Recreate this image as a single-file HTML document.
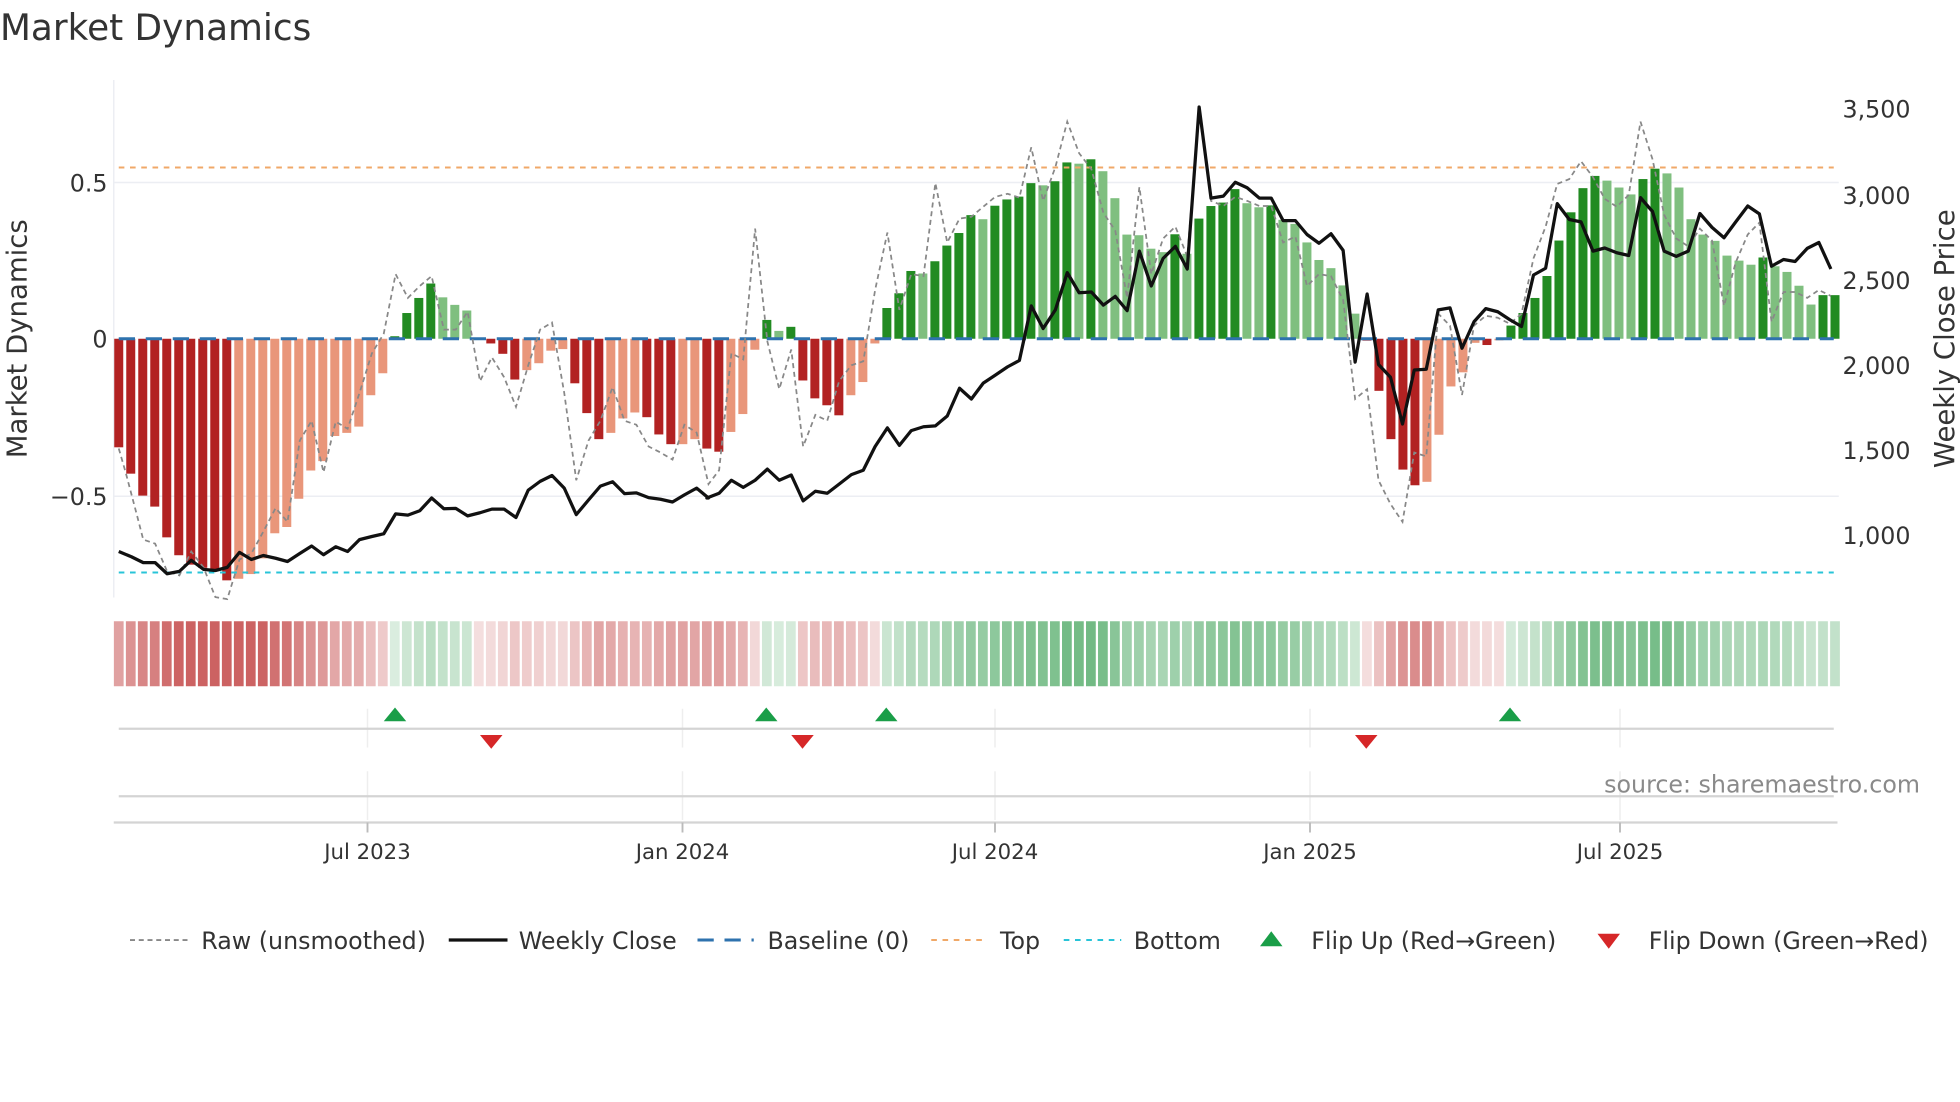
<!DOCTYPE html>
<html><head><meta charset="utf-8">
<style>
html,body{margin:0;padding:0;background:#fff;}
svg{display:block;font-family:"DejaVu Sans","Liberation Sans",sans-serif;}
</style></head>
<body>
<svg id="c" width="1960" height="1102" viewBox="0 0 1568 881.6" xmlns="http://www.w3.org/2000/svg">
<rect width="1568" height="882" fill="#fff"/>
<text x="0" y="32" font-size="29" fill="#333" textLength="249" lengthAdjust="spacingAndGlyphs">Market Dynamics</text>
<line x1="91" y1="146" x2="1471" y2="146" stroke="#eceef3" stroke-width="1.2"/>
<line x1="91" y1="397" x2="1471" y2="397" stroke="#eceef3" stroke-width="1.2"/>
<line x1="91" y1="64" x2="91" y2="478" stroke="#eceef3" stroke-width="1.2"/>
<g id="bars"></g>
<g id="strip"></g>
<line x1="95" y1="134" x2="1467" y2="134" stroke="#f0a868" stroke-width="1.6" stroke-dasharray="4.5,4.5"/>
<line x1="95" y1="458" x2="1467" y2="458" stroke="#28c4d8" stroke-width="1.6" stroke-dasharray="4.5,4.5"/>
<line x1="95" y1="271" x2="1467" y2="271" stroke="#2e72ae" stroke-width="2.4" stroke-dasharray="13,8.6"/>
<polyline id="raw" fill="none" stroke="#888" stroke-width="1.4" stroke-dasharray="4,3"/>
<polyline id="px" fill="none" stroke="#111" stroke-width="2.6" stroke-linejoin="round"/>
<g font-size="19" fill="#333">
<text x="86" y="153" text-anchor="end">0.5</text>
<text x="86" y="278" text-anchor="end">0</text>
<text x="86" y="404" text-anchor="end">−0.5</text>
<text x="1474" y="94">3,500</text>
<text x="1474" y="163">3,000</text>
<text x="1474" y="231">2,500</text>
<text x="1474" y="299">2,000</text>
<text x="1474" y="367">1,500</text>
<text x="1474" y="435">1,000</text>
</g>
<text transform="translate(21,271) rotate(-90)" font-size="22" fill="#333" text-anchor="middle">Market Dynamics</text>
<text transform="translate(1563,271) rotate(-90)" font-size="22" fill="#333" text-anchor="middle">Weekly Close Price</text>
<g stroke="#eeeeee" stroke-width="1.2">
<line x1="294" y1="567" x2="294" y2="598"/><line x1="546" y1="567" x2="546" y2="598"/><line x1="796" y1="567" x2="796" y2="598"/><line x1="1048" y1="567" x2="1048" y2="598"/><line x1="1296" y1="567" x2="1296" y2="598"/>
<line x1="294" y1="617" x2="294" y2="656"/><line x1="546" y1="617" x2="546" y2="656"/><line x1="796" y1="617" x2="796" y2="656"/><line x1="1048" y1="617" x2="1048" y2="656"/><line x1="1296" y1="617" x2="1296" y2="656"/>
</g>
<line x1="95" y1="583" x2="1467" y2="583" stroke="#d4d4d4" stroke-width="1.8"/>
<line x1="95" y1="637" x2="1467" y2="637" stroke="#d4d4d4" stroke-width="1.8"/>
<line x1="91" y1="658" x2="1470" y2="658" stroke="#d4d4d4" stroke-width="1.8"/>
<g stroke="#bbb" stroke-width="1.5">
<line x1="294" y1="658" x2="294" y2="666"/><line x1="546" y1="658" x2="546" y2="666"/><line x1="796" y1="658" x2="796" y2="666"/><line x1="1048" y1="658" x2="1048" y2="666"/><line x1="1296" y1="658" x2="1296" y2="666"/>
</g>
<g fill="#1a9e48">
<polygon points="307,577 325,577 316,566"/><polygon points="604,577 622,577 613,566"/><polygon points="700,577 718,577 709,566"/><polygon points="1199,577 1217,577 1208,566"/>
</g>
<g fill="#d62728">
<polygon points="384,588 402,588 393,599"/><polygon points="633,588 651,588 642,599"/><polygon points="1084,588 1102,588 1093,599"/>
</g>
<text x="1536" y="634" font-size="19" fill="#8a8a8a" text-anchor="end">source: sharemaestro.com</text>
<g font-size="17" fill="#333" text-anchor="middle">
<text x="294" y="687">Jul 2023</text><text x="546" y="687">Jan 2024</text><text x="796" y="687">Jul 2024</text><text x="1048" y="687">Jan 2025</text><text x="1296" y="687">Jul 2025</text>
</g>
<g font-size="19" fill="#333">
<line x1="104" y1="752" x2="150" y2="752" stroke="#888" stroke-width="1.5" stroke-dasharray="4,3"/>
<text x="161" y="759">Raw (unsmoothed)</text>
<line x1="359" y1="752" x2="406" y2="752" stroke="#111" stroke-width="2.6"/>
<text x="415" y="759">Weekly Close</text>
<line x1="558" y1="752" x2="603" y2="752" stroke="#2e72ae" stroke-width="2.4" stroke-dasharray="13,8.6"/>
<text x="614" y="759">Baseline (0)</text>
<line x1="745" y1="752" x2="790" y2="752" stroke="#f0a868" stroke-width="1.6" stroke-dasharray="4.5,4.5"/>
<text x="800" y="759">Top</text>
<line x1="851" y1="752" x2="897" y2="752" stroke="#28c4d8" stroke-width="1.6" stroke-dasharray="4.5,4.5"/>
<text x="907" y="759">Bottom</text>
<polygon points="1008,757 1026,757 1017,745" fill="#1a9e48"/>
<text x="1049" y="759">Flip Up (Red→Green)</text>
<polygon points="1278,747 1296,747 1287,759" fill="#d62728"/>
<text x="1319" y="759">Flip Down (Green→Red)</text>
</g>
</svg>
<script>
var NS="http://www.w3.org/2000/svg";
var B=[[-.346,'D'],[-.43,'D'],[-.5,'D'],[-.535,'D'],[-.633,'D'],[-.69,'D'],[-.72,'D'],[-.73,'D'],[-.74,'D'],[-.77,'D'],
[-.765,'L'],[-.75,'L'],[-.7,'L'],[-.62,'L'],[-.6,'L'],[-.51,'L'],[-.42,'L'],[-.39,'L'],[-.31,'L'],[-.3,'L'],[-.28,'L'],[-.18,'L'],[-.11,'L'],
[.008,'G'],[.082,'G'],[.13,'G'],[.176,'G'],[.132,'g'],[.108,'g'],[.09,'g'],[-.001,'D'],[-.015,'D'],[-.048,'D'],[-.13,'D'],
[-.1,'L'],[-.078,'L'],[-.038,'L'],[-.033,'L'],[-.142,'D'],[-.237,'D'],[-.32,'D'],[-.3,'L'],[-.254,'L'],[-.235,'L'],[-.25,'D'],[-.305,'D'],[-.336,'D'],[-.336,'L'],[-.32,'L'],[-.35,'D'],
[-.36,'D'],[-.297,'L'],[-.24,'L'],[-.035,'L'],[.06,'G'],[.025,'g'],[.038,'G'],[-.133,'D'],[-.19,'D'],[-.212,'D'],[-.244,'D'],[-.18,'L'],[-.138,'L'],[-.015,'L'],
[.098,'G'],[.145,'G'],[.216,'G'],[.208,'g'],[.247,'G'],[.297,'G'],[.337,'G'],[.394,'G'],[.381,'g'],[.424,'G'],[.444,'G'],[.453,'G'],[.496,'G'],[.489,'g'],[.502,'G'],[.562,'G'],[.558,'g'],[.572,'G'],[.534,'g'],[.448,'g'],[.332,'g'],[.33,'g'],[.287,'g'],[.276,'g'],[.333,'G'],[.271,'g'],[.383,'G'],[.423,'G'],[.434,'G'],[.477,'G'],[.432,'g'],[.419,'g'],[.425,'G'],[.379,'g'],[.366,'g'],
[.307,'g'],[.251,'g'],[.225,'g'],[.17,'g'],[.08,'g'],[-.006,'D'],[-.166,'D'],[-.32,'D'],[-.417,'D'],[-.467,'D'],[-.456,'L'],[-.306,'L'],[-.152,'L'],[-.107,'L'],[-.013,'L'],[-.02,'D'],[-.005,'L'],
[.042,'G'],[.082,'G'],[.13,'G'],[.2,'G'],[.313,'G'],[.403,'G'],[.48,'G'],[.519,'G'],[.504,'g'],[.482,'g'],[.46,'g'],[.509,'G'],[.542,'G'],[.527,'g'],[.482,'g'],[.381,'g'],[.332,'g'],[.312,'g'],[.265,'g'],[.249,'g'],[.236,'g'],[.259,'G'],[.231,'g'],[.213,'g'],[.169,'g'],[.109,'g'],[.139,'G'],[.139,'G']];
var col={D:'#b22222',L:'#e9967a',G:'#228b22',g:'#7fbf7f'};
var sp=(1468-95)/(B.length-1), bw=7.2;
var gb=document.getElementById('bars'), gs=document.getElementById('strip');
function mix(c,a){return 'rgb('+c.map(function(v){return Math.round(255-(255-v)*a)}).join(',')+')';}
B.forEach(function(b,i){
  var x=95+i*sp, v=b[0], y0=271, y1=271-v*251;
  var r=document.createElementNS(NS,'rect');
  r.setAttribute('x',x-bw/2);r.setAttribute('width',bw);
  r.setAttribute('y',Math.min(y0,y1));r.setAttribute('height',Math.max(0.8,Math.abs(y1-y0)));
  r.setAttribute('fill',col[b[1]]);gb.appendChild(r);
  var s=document.createElementNS(NS,'rect');
  s.setAttribute('x',x-sp/2+0.9);s.setAttribute('width',sp-1.8);s.setAttribute('y',497);s.setAttribute('height',52);
  var a=Math.min(0.85,0.18+Math.abs(v)*0.95);
  s.setAttribute('fill',v<0?mix([195,70,70],a):mix([60,160,85],a));gs.appendChild(s);
});
function Z(pts,x0,sx,start){return pts.map(function(p){return (x0+(p[0]-start)*sx).toFixed(1)+','+(64+p[1]*0.317).toFixed(1);});}
var p3=[[22,1190],[55,1203],[86,1218],[117,1218],[148,1246],[180,1240],[211,1212],[243,1235],[274,1238],[305,1230],[337,1192],[368,1210],[399,1200],[431,1207],[462,1215],[494,1195],[525,1176],[556,1198],[588,1178],[619,1190],[650,1160],[682,1152],[713,1145],[744,1095],[776,1098],[807,1087],[838,1055],[870,1082],[901,1081],[932,1100],[964,1092],[995,1083],[1027,1083],[1058,1104],[1090,1035],[1121,1013],[1152,998],[1184,1030],[1215,1097],[1247,1060],[1278,1025],[1310,1014],[1341,1044],[1372,1042],[1404,1054],[1435,1058],[1466,1065],[1497,1047],[1529,1030],[1560,1055]];
var p4=[[17,1055],[49,1043],[81,1010],[112,1028],[143,1010],[175,982],[206,1010],[237,997],[268,1062],[300,1038],[331,1043],[362,1020],[394,996],[425,985],[456,925],[488,878],[519,922],[550,885],[582,875],[613,873],[644,848],[676,778],[707,805],[738,765],[769,745],[801,724],[832,708],[863,570],[894,627],[926,580],[957,486],[988,537],[1020,535],[1051,568],[1082,546],[1113,582],[1145,432],[1176,520],[1207,450],[1239,420],[1270,477],[1301,68],[1332,298],[1364,293],[1395,258],[1426,272],[1458,298],[1489,298],[1520,355],[1552,355]];
var p5=[[46,390],[80,412],[114,388],[148,430],[182,712],[216,540],[248,718],[282,750],[316,868],[349,732],[383,730],[417,580],[450,575],[484,677],[518,610],[551,577],[585,585],[619,605],[652,622],[686,492],[720,475],[753,312],[787,352],[820,358],[854,432],[887,424],[921,436],[955,443],[988,297],[1022,332],[1055,432],[1089,445],[1123,432],[1156,337],[1190,372],[1224,398],[1257,358],[1291,318],[1324,338],[1358,470],[1392,453],[1425,458],[1459,425],[1492,410],[1526,477]];
var r3=[[22,930],[40,990],[70,1100],[86,1160],[117,1170],[148,1240],[180,1250],[211,1190],[243,1230],[274,1305],[305,1310],[337,1210],[368,1195],[399,1140],[431,1080],[462,1115],[494,910],[525,860],[556,990],[588,862],[619,880],[650,790],[682,690],[713,640],[744,490],[776,550],[807,520],[838,495],[870,630],[901,630],[932,585],[964,760],[995,700],[1027,750],[1058,825],[1090,720],[1121,630],[1152,612],[1184,790],[1215,1010],[1247,910],[1278,860],[1310,775],[1341,860],[1372,870],[1404,925],[1435,940],[1466,958],[1497,870],[1529,890],[1560,1020]];
var r4=[[49,985],[81,690],[112,705],[143,375],[175,660],[206,780],[237,680],[268,925],[300,845],[331,860],[362,760],[394,720],[425,710],[456,530],[488,385],[519,580],[550,490],[582,495],[613,260],[644,410],[676,350],[707,345],[738,320],[769,295],[801,287],[832,297],[863,170],[894,305],[926,220],[957,105],[988,185],[1020,225],[1051,335],[1082,380],[1113,550],[1145,270],[1176,490],[1207,400],[1239,370],[1270,445],[1301,80],[1332,305],[1364,318],[1395,295],[1426,305],[1458,318],[1489,318],[1520,410],[1552,395]];
var r5=[[46,520],[80,490],[114,495],[148,555],[182,805],[216,780],[248,1010],[282,1070],[316,1115],[349,940],[383,950],[417,590],[450,620],[484,795],[518,620],[551,595],[585,600],[619,615],[652,590],[686,450],[720,370],[753,262],[787,250],[820,205],[854,245],[887,300],[921,320],[955,290],[988,105],[1022,200],[1055,340],[1089,400],[1123,420],[1156,375],[1190,405],[1224,570],[1257,460],[1291,390],[1324,360],[1358,610],[1392,535],[1425,535],[1459,550],[1492,530],[1526,545]];
var s34=sp/31.3, x3=95, x4=95+49*sp, x5=95+98*sp, s5=sp/33.9;
var P=[].concat(Z(p3,x3,s34,22),Z(p4,x4,s34,17),Z(p5,x5,s5,12));
var R=[].concat(Z(r3,x3,s34,22),Z(r4,x4,s34,17),Z(r5,x5,s5,12));
document.getElementById('px').setAttribute('points',P.join(' '));
document.getElementById('raw').setAttribute('points',R.join(' '));
</script>
</body></html>
